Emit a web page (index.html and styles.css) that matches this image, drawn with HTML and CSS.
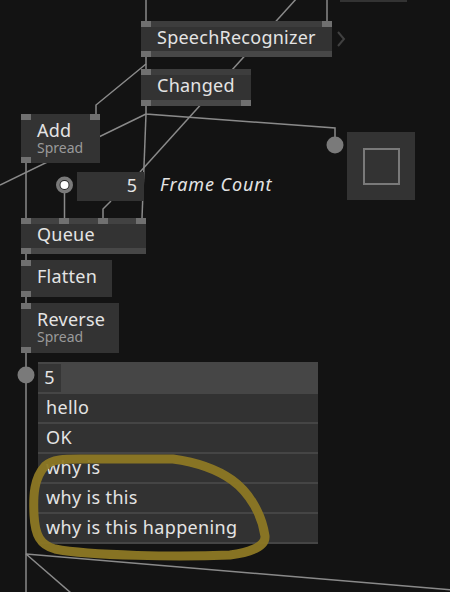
FILE: index.html
```html
<!DOCTYPE html>
<html lang="en">
<head>
    <meta charset="UTF-8">
    <title>Patch</title>
    <link rel="stylesheet" href="styles.css">
</head>
<body>
    <div class="patch">
        <!-- links -->
        <svg class="links" width="450" height="592" viewBox="0 0 450 592">
            <g fill="none" stroke="#8a8a8a" stroke-width="1.5">
                <path d="M146 0V21"/>
                <path d="M327 0V21"/>
                <path d="M297 -2L140 172"/>
                <path d="M146 57V69"/>
                <path d="M146 64L96 105V114"/>
                <path d="M146 106V114L335 128V145"/>
                <path d="M146 114L0 185"/>
                <path d="M146 114L142 218"/>
                <path d="M26 163V218"/>
                <path d="M64.5 185V218"/>
                <path d="M111 201L103 209V218"/>
                <path d="M26 254V592"/>
                <path d="M26 554L452 590"/>
                <path d="M26 554L71 593"/>
            </g>
            <circle cx="335" cy="145" r="8.5" fill="#7a7a7a"/>
            <circle cx="26" cy="375" r="8.5" fill="#7a7a7a"/>
            <circle cx="64.5" cy="185" r="8.5" fill="#7a7a7a"/>
            <circle cx="64.5" cy="185" r="5" fill="#2a2a2a"/>
            <circle cx="64.5" cy="185" r="4" fill="#fff"/>
            <polyline points="338,32 344,39 338,46" fill="none" stroke="#404040" stroke-width="2"/>
        </svg>

        <div class="stub"></div>

        <div class="node speech">
            <div class="pins band"><i></i><i></i></div>
            <div class="body">SpeechRecognizer</div>
            <div class="pins band out"><i></i></div>
        </div>

        <div class="node changed">
            <div class="pins band"><i></i></div>
            <div class="body">Changed</div>
            <div class="pins band out"><i></i><i></i></div>
        </div>

        <div class="node add">
            <div class="pins"><i></i><i></i></div>
            <div class="body">Add<div class="sub">Spread</div></div>
            <div class="pins"><i></i></div>
        </div>

        <div class="iobox">5</div>
        <span class="caption">Frame Count</span>

        <div class="toggle"><span></span></div>

        <div class="node queue">
            <div class="pins band"><i></i><i></i><i></i><i></i></div>
            <div class="body">Queue</div>
            <div class="pins band out"><i></i></div>
        </div>

        <div class="node flatten">
            <div class="pins"><i></i></div>
            <div class="body">Flatten</div>
            <div class="pins"><i></i></div>
        </div>

        <div class="node reverse">
            <div class="pins"><i></i></div>
            <div class="body">Reverse<div class="sub">Spread</div></div>
            <div class="pins"><i></i></div>
        </div>

        <div class="listbox">
            <div class="count"><span>5</span></div>
            <div class="row">hello</div>
            <div class="row">OK</div>
            <div class="row">why is</div>
            <div class="row">why is this</div>
            <div class="row">why is this happening</div>
        </div>

        <!-- highlighter -->
        <svg class="marker" width="450" height="592" viewBox="0 0 450 592">
            <path d="M173 459C195 462 215 468 232 480C250 493 262 515 265 536C266 548 245 553 230 555C180 557 90 556 55 549C40 545 35 535 34 515C33 495 34 478 45 466C52 459 65 459 80 459Z" fill="none" stroke="#8d7824" stroke-width="9" stroke-linejoin="round" opacity="0.95"/>
        </svg>
    </div>
</body>
</html>
```

FILE: styles.css
```css
*{
    margin: 0;
    padding: 0;
    box-sizing: border-box;
}
body{
    background-color: #131313;
    font-family: "Noto Sans", "Open Sans", sans-serif;
    color: #e4e4e4;
}
.patch{
    position: relative;
    width: 450px;
    height: 592px;
    overflow: hidden;
}
.links,
.marker{
    position: absolute;
    left: 0;
    top: 0;
}
.marker{
    pointer-events: none;
}
.stub{
    position: absolute;
    left: 340px;
    top: -10px;
    width: 67px;
    height: 12px;
    background-color: #333;
}

/* nodes */
.node{
    position: absolute;
    display: flex;
    flex-direction: column;
    background-color: #333;
}
.pins{
    display: flex;
    justify-content: space-between;
    height: 6px;
    flex: none;
}
.pins i{
    display: block;
    width: 10px;
    height: 6px;
    background-color: #707070;
}
.band{
    background-color: #3d3d3d;
}
.band.out{
    background-color: #474747;
}
.body{
    flex: 1;
    padding-left: 16px;
    font-size: 18px;
    line-height: 20px;
    letter-spacing: 0.25px;
    white-space: nowrap;
}
.sub{
    font-size: 14px;
    line-height: 16px;
    letter-spacing: 0;
    color: #9a9a9a;
}
.speech{
    left: 141px;
    top: 21px;
    width: 191px;
    height: 36px;
}
.changed{
    left: 141px;
    top: 69px;
    width: 110px;
    height: 37px;
}
.add{
    left: 21px;
    top: 114px;
    width: 79px;
    height: 49px;
}
.queue{
    left: 21px;
    top: 218px;
    width: 125px;
    height: 36px;
}
.queue .band{
    background-color: #424242;
}
.queue .band.out{
    background-color: #474747;
}
.flatten{
    left: 21px;
    top: 260px;
    width: 91px;
    height: 37px;
}
.reverse{
    left: 21px;
    top: 303px;
    width: 98px;
    height: 50px;
}

/* io boxes */
.iobox{
    position: absolute;
    left: 77px;
    top: 172px;
    width: 67px;
    height: 29px;
    background-color: #333;
    text-align: right;
    padding-right: 7px;
    font-size: 18px;
    line-height: 27px;
}
.caption{
    position: absolute;
    left: 160px;
    top: 174px;
    font-size: 18px;
    line-height: 20px;
    font-style: italic;
    letter-spacing: 0.9px;
}
.toggle{
    position: absolute;
    left: 347px;
    top: 132px;
    width: 68px;
    height: 68px;
    background-color: #333;
    display: flex;
    align-items: center;
    justify-content: center;
}
.toggle span{
    width: 37px;
    height: 37px;
    border: 2px solid #7a7a7a;
}
.listbox{
    position: absolute;
    left: 38px;
    top: 362px;
    width: 280px;
    font-size: 18px;
}
.count{
    height: 32px;
    background-color: #464646;
    display: flex;
    align-items: center;
}
.count span{
    width: 23px;
    height: 28px;
    background-color: #353535;
    text-align: center;
    line-height: 26px;
}
.row{
    height: 30px;
    padding-left: 8px;
    line-height: 26px;
    letter-spacing: 0.35px;
    background-color: #323232;
    border-bottom: 2px solid #454545;
}
```
